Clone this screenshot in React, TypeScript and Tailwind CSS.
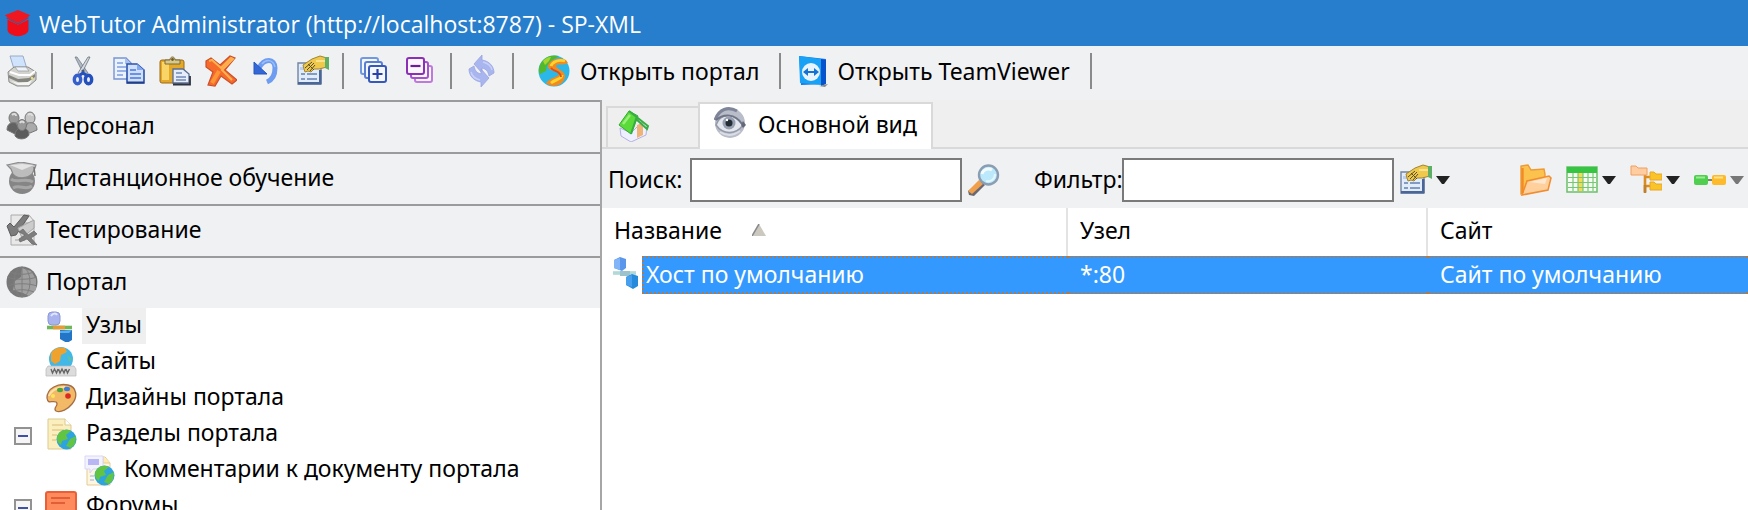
import React from "react";

type IconProps = { className?: string };

function Svg({ children, className = "size-8" }: { children: React.ReactNode; className?: string }) {
  return (
    <svg viewBox="0 0 32 32" className={`${className} shrink-0`} aria-hidden="true">
      {children}
    </svg>
  );
}

const LogoIcon = () => (
  <Svg className="size-7">
    <path d="M1 7 16 1l14 6-5 4-9 5-10-5z" fill="#f01820" />
    <path d="M4 12l12 6 12-6v12c0 4-7 7-12 7S4 28 4 24z" fill="#ee0d18" />
    <path d="M3 10l13 7 12-7" fill="none" stroke="#9a3558" strokeWidth="1.6" />
  </Svg>
);

const PrinterIcon = () => (
  <Svg>
    <path d="M4 1h13l4 13H8z" fill="#cfe3fd" stroke="#9aabc8" />
    <path d="M2 17 8 12h14l8 5v8l-7 6H11l-8-4z" fill="#d2d2cf" stroke="#8a8a88" />
    <path d="M4 17l9 3h11l5-4" fill="none" stroke="#fff" strokeWidth="2" />
    <path d="M3 20l9 4 11-1 6-4v3l-7 5H12l-9-4z" fill="#85857f" />
    <path d="M5 26l8 2 9-1 4-2-3 5H12z" fill="#f5f5f3" />
    <path d="M9 12h11l3 4H12z" fill="#edf3fb" stroke="#999" strokeWidth=".7" />
    <circle cx="26" cy="23" r="1.3" fill="#e8dd69" />
  </Svg>
);

const CutIcon = () => (
  <Svg>
    <path d="M8 2 17 20l4-2L10 2z" fill="#b0bac4" stroke="#69727d" strokeWidth=".7" />
    <path d="M23 2 14 20l-3-2L21 2z" fill="#d4dae1" stroke="#59636e" strokeWidth=".7" />
    <circle cx="16" cy="16" r="1.6" fill="#4c5972" />
    <ellipse cx="10.5" cy="24.5" rx="3.2" ry="4.2" fill="#e9eefb" stroke="#3560cc" strokeWidth="3.4" />
    <ellipse cx="21.5" cy="24.5" rx="3.2" ry="4.2" fill="#e9eefb" stroke="#2450bd" strokeWidth="3.4" />
    <path d="M13 20l3-2 3 2" fill="none" stroke="#2450bd" strokeWidth="3" />
  </Svg>
);

const CopyIcon = () => (
  <Svg>
    <path d="M1 3h12l5 5v16H1z" fill="#eaf1ff" stroke="#7794cf" strokeWidth="1.4" />
    <path d="M12 3l6 6h-6z" fill="#a8c0ee" />
    <path d="M4 8h6M4 12h9M4 16h9M4 20h6" stroke="#7f9fe0" strokeWidth="1.4" />
    <path d="M14 9h10l7 6v13H14z" fill="#cfe0ff" stroke="#2c52ad" strokeWidth="1.6" />
    <path d="M24 9l7 6h-7z" fill="#86a8ec" />
    <path d="M17 15h6M17 19h11M17 23h11" stroke="#4d79d4" strokeWidth="1.6" />
    <path d="M14 27.500h17" stroke="#223f86" strokeWidth="2" />
  </Svg>
);

const PasteIcon = () => (
  <Svg>
    <rect x="1" y="5" width="24" height="23" rx="2" fill="#e5a92a" stroke="#9a6819" />
    <path d="M3 7h7v18H3z" fill="#f9d467" />
    <path d="M6 9V5h5c0-4 5-4 5 0h5v4z" fill="#d8c98a" stroke="#7a6a37" />
    <circle cx="13.500" cy="4.500" r="1.400" fill="#6b5b28" />
    <path d="M14 14h10l6 5v9H14z" fill="#e5edfa" stroke="#586c92" strokeWidth="1.300" />
    <path d="M17 18h6M17 22h10M17 25h10" stroke="#7288b5" strokeWidth="1.500" />
    <path d="M14 29.500h17V21" fill="none" stroke="#2e3340" strokeWidth="1.800" />
  </Svg>
);

const DeleteIcon = () => (
  <Svg>
    <path d="M1 6l5-3 9 7 10-9 5 2-10 12 12 10-5 4-11-8-6 10-7-1 5-13-7-5z" fill="#f66a2b" stroke="#c9502c" strokeWidth="1.200" />
    <path d="M4 6l3-1 9 8L26 3l2 1-11 11 10 10" fill="none" stroke="#ffb14f" strokeWidth="2" />
    <path d="M14 16L7 28" stroke="#ff9636" strokeWidth="4" />
  </Svg>
);

const UndoIcon = () => (
  <Svg>
    <path d="M8 13C13 3 24 3 24 13c0 7-3 12-8 14" fill="none" stroke="#6d9cf0" strokeWidth="5" />
    <path d="M11 9C15 4 22 4 24 12" fill="none" stroke="#9dbff8" strokeWidth="1.500" />
    <path d="M3 7v12h13z" fill="#3267d5" stroke="#2456c4" />
  </Svg>
);

const PropertiesIcon = () => (
  <Svg>
    <path d="M1 8h23v21H1z" fill="#e2ebf8" stroke="#7284a3" strokeWidth="1.400" />
    <path d="M1 27h23v2.500H1zM22 15h2.500v14H22z" fill="#4a6698" />
    <path d="M3 12h6v3H3z" fill="#bcd0ee" />
    <path d="M4 19h4M4 24h4M10 19h10M10 24h10" stroke="#6181b4" strokeWidth="1.600" />
    <path d="M6 10l9-6 8-3 7 2v9l-8 2-5 0-3 3-3-1-3 1-1-3z" fill="#efc94c" stroke="#a08438" strokeWidth="1" />
    <path d="M19 6h9" stroke="#f9e28d" strokeWidth="2" />
    <path d="M8 13l7-6M10 15l7-7M13 16l5-6M11 9l6 6" stroke="#5b4d24" strokeWidth="1" />
    <path d="M28 2h4v13l-4-2z" fill="#5fae66" />
  </Svg>
);

const ExpandAllIcon = () => (
  <Svg>
    <g fill="#f4f7ff" strokeWidth="2" strokeLinejoin="round">
      <rect x="3" y="3" width="17" height="16" rx="2" stroke="#7299de" />
      <rect x="7" y="7" width="17" height="16" rx="2" stroke="#587fd2" />
      <rect x="11" y="11" width="17" height="16" rx="2" stroke="#3658b6" />
    </g>
    <path d="M14.500 19h10M19.500 14v10" stroke="#2942a8" strokeWidth="2.200" />
  </Svg>
);

const CollapseAllIcon = () => (
  <Svg>
    <g fill="#fbf5ff" strokeWidth="2">
      <rect x="11" y="11" width="17" height="16" rx="2" stroke="#bd7ada" />
      <rect x="7" y="7" width="17" height="16" rx="2" stroke="#a552cb" />
      <rect x="3" y="3" width="17" height="16" rx="2" stroke="#8b30b5" />
    </g>
    <path d="M6.500 11h10" stroke="#6b1d95" strokeWidth="2.200" />
  </Svg>
);

const RefreshIcon = () => (
  <Svg>
    <g fill="#a9b5ee" stroke="#98a4e2" strokeWidth=".8">
      <path d="M16 0v5c7 1 12 6 12 13l-5 3c-1-5-3-7-7-8v5L8 9z" />
      <path d="M15 32v-5C8 26 3 21 3 14l5-3c1 5 3 7 7 8v-5l8 9z" />
    </g>
    <path d="M17 7c4 1 8 3 9 8M14 25c-4-1-8-3-9-8" stroke="#c7d0f8" strokeWidth="1.600" fill="none" />
  </Svg>
);

const PortalIcon = () => (
  <Svg>
    <circle cx="16" cy="16" r="15.500" fill="#2bb8e8" />
    <path d="M2 10C5 2 14-1 21 1l-8 5-4 5-1 5-6 3C0 16 1 12 2 10z" fill="#52b92c" />
    <path d="M5 6c2-2 5-4 8-4l-2 4-4 4z" fill="#a6d52f" />
    <path d="M28 5C20 1 10 5 10 12c1 5 10 3 11 7 0 3-8 3-13 9 5 5 17 4 19-6 1-6-9-8-9-11s7 0 12-3z" fill="#f38a1e" />
    <path d="M27 6c-6-2-13 1-14 5M24 20c0 4-6 4-11 8" stroke="#ffd32e" strokeWidth="2.800" fill="none" />
    <path d="M13 13c3 4 10 3 10 9" fill="none" stroke="#da4f1a" strokeWidth="1.800" />
  </Svg>
);

const TeamViewerIcon = () => (
  <Svg>
    <path d="M2 1l27 3v25L4 30z" fill="#1478e8" />
    <path d="M2 1l22 3v26L3 28z" fill="#19a2f5" />
    <path d="M24 4l5 1v24l-5 2z" fill="#0753cd" />
    <path d="M22 31l9-2-3 3z" fill="#888" />
    <circle cx="14" cy="17" r="9" fill="#e8f4fd" />
    <path d="M6 17l5-4v3h6v-3l5 4-5 4v-3h-6v3z" fill="#1372d4" />
  </Svg>
);

const StaffIcon = () => (
  <Svg>
    <g stroke="#777" strokeWidth="1">
      <ellipse cx="8" cy="8" rx="5" ry="6" fill="#999" />
      <ellipse cx="24" cy="8" rx="5" ry="6" fill="#c4c4c4" />
      <path d="M1 20c0-7 5-8 9-7l4 8-5 3z" fill="#626262" />
      <path d="M31 20c0-7-5-8-9-7l-5 8 7 2z" fill="#aaa" />
      <path d="M9 26c0-6 3-8 7-8s7 2 7 7c-3 5-11 5-14 1z" fill="#5c5c5c" />
      <ellipse cx="16" cy="15" rx="4.500" ry="5.500" fill="#989898" />
    </g>
    <path d="M6 5c2-2 4-1 4 1M22 5c2-2 4-1 4 1M14 13c1-2 3-2 4 0" fill="none" stroke="#ddd" strokeWidth="2" />
  </Svg>
);

const LearningIcon = () => (
  <Svg>
    <circle cx="16" cy="19" r="13" fill="#858585" />
    <path d="M5 17c5 5 15-2 22 3M7 26c7-4 12 3 19-2" stroke="#a6a6a6" strokeWidth="3" fill="none" />
    <path d="M1 3l14-3 15 3-1 3-3 6c-5 5-15 5-19 0L5 7z" fill="#bdbdbd" stroke="#8a8a8a" strokeWidth="1.200" />
    <path d="M4 3l12-1 12 1-12 5z" fill="#e4e4e4" />
    <path d="M28 5l1 9" stroke="#777" strokeWidth="1.500" />
  </Svg>
);

const TestingIcon = () => (
  <Svg>
    <path d="M5 1h18l5 6v24H5z" fill="#e8e8e8" stroke="#aaa" />
    <path d="M9 26h10M14 9h10" stroke="#c4c4c4" strokeWidth="2" />
    <path d="M1 12l3-3 4 4L18 1l5 1-13 19-5 1z" fill="#7b7b7b" stroke="#5c5c5c" />
    <path d="M12 14l16-8v8L16 24z" fill="#ccc" stroke="#a4a4a4" />
    <path d="M13 18l4-3 5 6 6-4 3 3-6 4 6 7-5-1-5-5-7 3-1-3 6-4z" fill="#7d7d7d" stroke="#666" strokeWidth=".700" />
  </Svg>
);

const GrayGlobeIcon = () => (
  <Svg>
    <circle cx="16" cy="16" r="15.500" fill="#777" />
    <path d="M16 2l9 3 5 8v11l-7 6-6-3-10-3 2-9 6-4z" fill="#a0a0a0" />
    <g fill="none" stroke="#7e7e7e" strokeWidth="1">
      <ellipse cx="16" cy="16" rx="8" ry="15" />
      <path d="M1 11c8 3 22 3 30 0M1 20c8-3 22-3 30 0M16 1v30M4 6c8 3 16 3 24 0M4 26c8-3 16-3 24 0" />
    </g>
  </Svg>
);

const NodesIcon = () => (
  <Svg>
    <rect x="3" y="2" width="12" height="13" rx="4" fill="#a9b4ef" stroke="#8b97d6" />
    <path d="M6 6c2-3 5-3 6-1" stroke="#e1e5ff" strokeWidth="2" fill="none" />
    <path d="M2 17.500h25" stroke="#71b759" strokeWidth="3.600" />
    <path d="M8 15.700h12v3.600H8z" fill="#e99c35" />
    <path d="M15 20h12v10l-5 3-7-4z" fill="#2376c7" />
    <path d="M15 21l12-1-3 3h-9z" fill="#58aeea" />
  </Svg>
);

const HostIcon = () => (
  <Svg>
    <path d="M2 3l6-3 6 2v9l-4 3-8-3z" fill="#5b96ed" />
    <path d="M2 3l6-2v12l-6-2z" fill="#82b4f8" />
    <path d="M1 16h23" stroke="#b0d9d8" strokeWidth="3.600" />
    <path d="M8 14h10v5H8z" fill="#9cc3cb" />
    <path d="M14 20l6-3 6 2v10l-5 3-7-4z" fill="#278bdc" />
    <path d="M14 20l6-2v12l-6-2z" fill="#479ff0" />
  </Svg>
);

const SitesIcon = () => (
  <Svg>
    <circle cx="16" cy="13" r="12" fill="#41b8e7" />
    <path d="M6 7c4-6 10-6 14-5l2 4-6 3-1 6-5 3-4-3z" fill="#efa22e" />
    <path d="M22 9l5 4-3 3z" fill="#5ac1a4" />
    <path d="M3 20h26l2 3v7H1v-7z" fill="#dcdcdc" stroke="#b8b8b8" strokeWidth=".700" />
    <path d="M6 23l1.500 4 2-4 2 4 1.500-4m.500 0l1.500 4 2-4 2 4 1.500-4m.500 0l1.500 4 2-4" stroke="#666" strokeWidth="1.400" fill="none" />
  </Svg>
);

const PaletteIcon = () => (
  <Svg>
    <path d="M2 16C2 6 13 1 23 3c9 2 10 12 4 19-4 5-11 9-16 7-4-3 4-6 0-9-4-2-8 3-9-4z" fill="#f2b967" stroke="#a46d45" strokeWidth="1.300" />
    <path d="M4 14c2-6 9-9 16-9" stroke="#ffe1a7" strokeWidth="2" fill="none" />
    <ellipse cx="15" cy="8" rx="3" ry="2.200" fill="#4ca43e" />
    <ellipse cx="22" cy="7" rx="3" ry="2.200" fill="#397ddd" />
    <circle cx="23" cy="14" r="2.800" fill="#d92b21" />
    <circle cx="8" cy="14" r="2" fill="#ffe55c" />
  </Svg>
);

const MiniGlobe = () => (
  <>
    <circle cx="21.500" cy="21.500" r="10" fill="#2da3e0" />
    <path d="M12 20c1-7 8-10 14-7l-5 4 2 4-6 2-1 4c-3-2-4-4-4-7zM25 21l6-3-1 8-4 4-5-2z" fill="#62c443" />
  </>
);

const SectionIcon = () => (
  <Svg>
    <path d="M3 1h17l6 6v24H3z" fill="#fbeebf" stroke="#dccb91" />
    <path d="M20 1v6h6" fill="#fff" stroke="#dccb91" />
    <path d="M7 7h11M7 12h12M7 17h5M7 22h4" stroke="#e5ce8c" strokeWidth="1.600" />
    <MiniGlobe />
  </Svg>
);

const CommentsIcon = () => (
  <Svg>
    <path d="M4 3h18l5 6v22H4z" fill="#fff6dc" stroke="#e3cb98" />
    <path d="M20 2v7h7" fill="#ffebae" stroke="#e3cb98" />
    <path d="M2 2h18v13H10l-3 4v-4H2z" fill="#f3f2ff" stroke="#d9d7f7" />
    <path d="M5 5h11v6H5z" fill="#b8b6f3" />
    <path d="M7 22h4M7 26h4" stroke="#c6d5ee" strokeWidth="2" />
    <MiniGlobe />
  </Svg>
);

const ForumIcon = () => (
  <Svg>
    <rect x="1" y="2" width="30" height="21" rx="2" fill="#ff8a5c" stroke="#ea5f38" strokeWidth="2" />
    <path d="M8 22v7l7-7z" fill="#f46c43" />
    <path d="M6 8h19M6 13h14" stroke="#e25e37" strokeWidth="1.800" />
  </Svg>
);

const HomeIcon = () => (
  <Svg>
    <path d="M2 18l11 5 11-11 5 4-1 9-15 7-10-6z" fill="#eef0ff" stroke="#b3b1e2" />
    <path d="M19 15l6-2v12l-6 3z" fill="#f0b377" />
    <path d="M11 1l9 5-7 18L1 15z" fill="#5bdb3a" stroke="#34a834" />
    <path d="M11 1l19 15-1 3-11-10-5 15" fill="none" stroke="#37ae42" strokeWidth="2" />
    <path d="M5 14l7-9" stroke="#9bf07c" strokeWidth="2.400" />
  </Svg>
);

const EyeIcon = () => (
  <Svg>
    <circle cx="16" cy="16" r="15" fill="#b9bdc9" />
    <path d="M1 13C5 2 14-1 23 4" stroke="#7f8598" strokeWidth="3" fill="none" />
    <path d="M2 18C6 7 20 4 29 18c-7 10-20 10-27 0z" fill="#e4e7ee" stroke="#959aab" strokeWidth="1.500" />
    <path d="M2 13c8-7 19-6 26 4" stroke="#6f7587" strokeWidth="2" fill="none" />
    <circle cx="15" cy="16" r="6.500" fill="#97a0b0" />
    <circle cx="15" cy="16" r="3.500" fill="#262c35" />
    <circle cx="13" cy="13" r="1.200" fill="#fff" />
    <path d="M29 14l3 4-3 3-2-3z" fill="#646778" />
    <path d="M6 25c6 4 13 4 20-1" stroke="#dadde5" strokeWidth="2" fill="none" />
  </Svg>
);

const SearchIcon = () => (
  <Svg>
    <path d="M13 17l4 4-11 11-5-1-1-4z" fill="#6a6874" />
    <path d="M11 16l4 4L4 30l-4-3z" fill="#f0a04a" />
    <circle cx="20.500" cy="11" r="9.500" fill="#bbe8fb" stroke="#8b9db3" strokeWidth="2.400" />
    <path d="M14 10c1-5 7-6 10-4" stroke="#f2fcff" strokeWidth="3" fill="none" />
    <path d="M18 17c5 1 9-2 9-7" stroke="#e2f8ff" strokeWidth="2" fill="none" />
  </Svg>
);

const FolderIcon = () => (
  <Svg>
    <path d="M1 30V2l7-1 3 5 13-1 1 5v15z" fill="#fbc34e" stroke="#ef9a35" strokeWidth="1.400" />
    <path d="M2 31l5-14 22-5 2 2-3 12z" fill="#ffcf9c" stroke="#f08d30" strokeWidth="1.500" />
    <path d="M2.500 29V4" stroke="#f28b24" strokeWidth="2.400" />
    <path d="M9 18l18-4-2 6" fill="#ffe7cd" />
  </Svg>
);

const GridIcon = () => (
  <Svg>
    <rect x="1" y="3" width="30" height="25" fill="#f5fff2" stroke="#69bf6a" strokeWidth="1.500" />
    <path d="M1 3h30v6H1z" fill="#36c443" />
    <path d="M12 9h5v18h-5z" fill="#f7da4e" />
    <path d="M2 13.500h28M2 18.500h28M2 23.500h28M7 9v18M12 9v18M17 9v18M22 9v18M27 9v18" stroke="#79c677" strokeWidth="1.200" />
  </Svg>
);

const HierarchyIcon = () => (
  <Svg>
    <path d="M15 8v20M15 13h7M15 22h7" stroke="#db8c21" strokeWidth="2.600" fill="none" />
    <path d="M1 2h5l2 2h9v7H1z" fill="#ffcda0" stroke="#f0a060" />
    <path d="M20 8h4l2 2h6v6H20zM20 18h4l2 2h6v6H20z" fill="#f9c32a" stroke="#ecA625" />
    <path d="M15 21v8" stroke="#c07f2c" strokeWidth="2.600" />
  </Svg>
);

const LinkIcon = () => (
  <Svg>
    <path d="M10 16h12" stroke="#7d8a60" strokeWidth="2" />
    <rect x="0" y="11" width="14" height="10" rx="2" fill="#4fce50" />
    <path d="M2 13.500h9" stroke="#9bec91" strokeWidth="2" />
    <rect x="18" y="11" width="14" height="10" rx="2" fill="#fcba2c" />
    <path d="M20 13.500h9" stroke="#ffe28b" strokeWidth="2" />
  </Svg>
);

function Caret({ className = "fill-[#222]" }: IconProps) {
  return (
    <svg viewBox="0 0 14 8" className={`h-2 w-3.5 shrink-0 ${className}`} aria-hidden="true">
      <path d="M0 0h14L8 8H6z" />
    </svg>
  );
}

const Divider = () => <span className="h-9 w-0.5 shrink-0 bg-[#8a8a8a]" />;

function ToolButton({ label, children }: { label: string; children: React.ReactNode }) {
  return (
    <button type="button" aria-label={label} className="flex shrink-0 items-center">
      {children}
    </button>
  );
}

const sections = [
  { label: "Персонал", icon: <StaffIcon /> },
  { label: "Дистанционное обучение", icon: <LearningIcon /> },
  { label: "Тестирование", icon: <TestingIcon /> },
  { label: "Портал", icon: <GrayGlobeIcon /> },
];

function Expander() {
  return (
    <button type="button" aria-label="Свернуть" className="mt-1 flex size-[18px] items-center justify-center border-2 border-[#929292] bg-[#f5f5f5]">
      <span className="h-0.5 w-2.5 bg-[#4050a4]" />
    </button>
  );
}

type NodeProps = { label: string; icon: React.ReactNode; open?: boolean; selected?: boolean; nested?: boolean };

function TreeNode({ label, icon, open, selected, nested }: NodeProps) {
  return (
    <div className={`flex h-9 items-center ${nested ? "pl-[38px]" : ""}`}>
      <span className="flex w-[45px] shrink-0 pl-3.5">{open && <Expander />}</span>
      {icon}
      <a
        href="#"
        className={`ml-[5px] flex h-9 items-center px-1 pb-1 whitespace-nowrap ${selected ? "bg-[#efefef]" : ""}`}
      >
        {label}
      </a>
    </div>
  );
}

function Sidebar() {
  return (
    <aside className="w-[602px] shrink-0 overflow-hidden border-r-2 border-[#a6a6a6] bg-white">
      <nav>
        {sections.map((s) => (
          <button
            key={s.label}
            type="button"
            className="flex h-13 w-full items-center gap-2 border-t-2 border-[#9b9b9b] bg-[#f0f1f3] pb-0.5 pl-1.5 text-left"
          >
            {s.icon}
            <span className="pb-0.5">{s.label}</span>
          </button>
        ))}
      </nav>
      <ul>
        <li><TreeNode label="Узлы" icon={<NodesIcon />} selected /></li>
        <li><TreeNode label="Сайты" icon={<SitesIcon />} /></li>
        <li><TreeNode label="Дизайны портала" icon={<PaletteIcon />} /></li>
        <li>
          <TreeNode label="Разделы портала" icon={<SectionIcon />} open />
          <ul>
            <li><TreeNode label="Комментарии к документу портала" icon={<CommentsIcon />} nested /></li>
          </ul>
        </li>
        <li><TreeNode label="Форумы" icon={<ForumIcon />} open /></li>
      </ul>
    </aside>
  );
}

function Tabs() {
  return (
    <div role="tablist" className="flex h-[49px] items-end bg-[#efefef]">
      <span className="h-full w-1 border-b-2 border-[#d9d9d9]" />
      <button role="tab" type="button" aria-label="Главная" className="flex h-[43px] w-[92px] items-center border-2 border-r-0 border-[#d9d9d9] pb-1 pl-2.5">
        <HomeIcon />
      </button>
      <button role="tab" type="button" aria-selected="true" className="flex h-[47px] items-center gap-3 border-2 border-b-0 border-[#d9d9d9] bg-white px-3.5 pb-2 whitespace-nowrap">
        <EyeIcon />
        <span className="pt-0.5">Основной вид</span>
      </button>
      <span className="h-full flex-1 border-b-2 border-[#d9d9d9]" />
    </div>
  );
}

function ViewBar() {
  return (
    <div className="flex h-[59px] items-center pt-[3px] pl-1.5">
      <label htmlFor="search" className="w-[82px] shrink-0 pb-0.5">Поиск:</label>
      <input id="search" className="h-11 w-[272px] border-2 border-[#7a7a7a] bg-white px-2" />
      <span className="ml-1.5 flex"><ToolButton label="Найти"><SearchIcon /></ToolButton></span>
      <label htmlFor="filter" className="ml-[34px] w-[88px] shrink-0 pb-0.5">Фильтр:</label>
      <input id="filter" className="h-11 w-[272px] border-2 border-[#7a7a7a] bg-white px-2" />
      <div className="ml-1.5 flex items-center">
        <ToolButton label="Свойства"><PropertiesIcon /><span className="ml-1"><Caret /></span></ToolButton>
      </div>
      <div className="ml-[70px] flex items-center gap-3.5">
        <ToolButton label="Открыть"><FolderIcon /></ToolButton>
        <ToolButton label="Таблица"><GridIcon /><span className="ml-1"><Caret /></span></ToolButton>
        <ToolButton label="Иерархия"><HierarchyIcon /><span className="ml-1"><Caret /></span></ToolButton>
        <ToolButton label="Связи"><LinkIcon /><span className="ml-1"><Caret className="fill-[#777]" /></span></ToolButton>
      </div>
    </div>
  );
}

function HostTable() {
  const cell = "border-y-2 border-dotted border-y-[#a97b50] bg-[#3399ff] p-0 pb-0.5 text-white whitespace-nowrap";
  return (
    <table className="w-full table-fixed border-separate border-spacing-0 text-left">
      <colgroup>
        <col className="w-10" />
        <col className="w-[426px]" />
        <col className="w-[360px]" />
        <col />
      </colgroup>
      <thead>
        <tr className="h-12">
          <th colSpan={2} className="border-r-2 border-[#e3e3e3] p-0 pb-1 pl-3 font-normal">
            <span className="flex items-center gap-[30px]">
              Название
              <svg viewBox="0 0 14 12" className="h-3 w-3.5" aria-hidden="true">
                <path d="M7 0l7 12H0z" fill="#cbc8c0" />
                <path d="M7 0L0 12" stroke="#888" strokeWidth="1.500" />
              </svg>
            </span>
          </th>
          <th className="border-r-2 border-[#e3e3e3] p-0 pb-1 pl-3 font-normal">Узел</th>
          <th className="p-0 pb-1 pl-3 font-normal">Сайт</th>
        </tr>
      </thead>
      <tbody>
        <tr className="h-[38px]">
          <td className="p-0 pb-1 pl-2.5"><HostIcon /></td>
          <td className={`${cell} border-l-2 border-l-[#a97b50] pl-0.5`}>Хост по умолчанию</td>
          <td className={`${cell} pl-3`}>*:80</td>
          <td className={`${cell} pl-3`}>Сайт по умолчанию</td>
        </tr>
      </tbody>
    </table>
  );
}

export default function App() {
  return (
    <div className="flex h-screen flex-col overflow-hidden bg-[#f0f1f3] font-['Noto_Sans',sans-serif] text-[23px] leading-8 text-black">
      <header className="flex h-[46px] shrink-0 items-center gap-[7px] bg-[#277ecc] pl-1 text-white">
        <LogoIcon />
        <h1 className="pt-0.5 font-['Open_Sans',sans-serif] text-[23px] whitespace-nowrap">WebTutor Administrator (http://localhost:8787) - SP-XML</h1>
      </header>
      <div role="toolbar" className="flex h-[54px] shrink-0 items-center pb-1 pl-1.5 whitespace-nowrap">
        <ToolButton label="Печать"><PrinterIcon /></ToolButton>
        <div className="ml-[13px] flex items-center gap-3.5">
          <Divider />
          <ToolButton label="Вырезать"><CutIcon /></ToolButton>
          <ToolButton label="Копировать"><CopyIcon /></ToolButton>
          <ToolButton label="Вставить"><PasteIcon /></ToolButton>
          <ToolButton label="Удалить"><DeleteIcon /></ToolButton>
          <ToolButton label="Отменить"><UndoIcon /></ToolButton>
          <ToolButton label="Свойства"><PropertiesIcon /></ToolButton>
        </div>
        <div className="ml-[13px] flex items-center gap-3.5">
          <Divider />
          <ToolButton label="Развернуть все"><ExpandAllIcon /></ToolButton>
          <ToolButton label="Свернуть все"><CollapseAllIcon /></ToolButton>
          <Divider />
          <ToolButton label="Обновить"><RefreshIcon /></ToolButton>
          <Divider />
        </div>
        <button type="button" className="ml-6 flex items-center gap-2.5"><PortalIcon />Открыть портал</button>
        <span className="ml-5 flex"><Divider /></span>
        <button type="button" className="ml-4 flex items-center gap-2"><TeamViewerIcon />Открыть TeamViewer</button>
        <span className="ml-5 flex"><Divider /></span>
      </div>
      <div className="flex min-h-0 flex-1">
        <Sidebar />
        <main className="flex min-w-0 flex-1 flex-col">
          <Tabs />
          <ViewBar />
          <div className="flex-1 bg-white"><HostTable /></div>
        </main>
      </div>
    </div>
  );
}
